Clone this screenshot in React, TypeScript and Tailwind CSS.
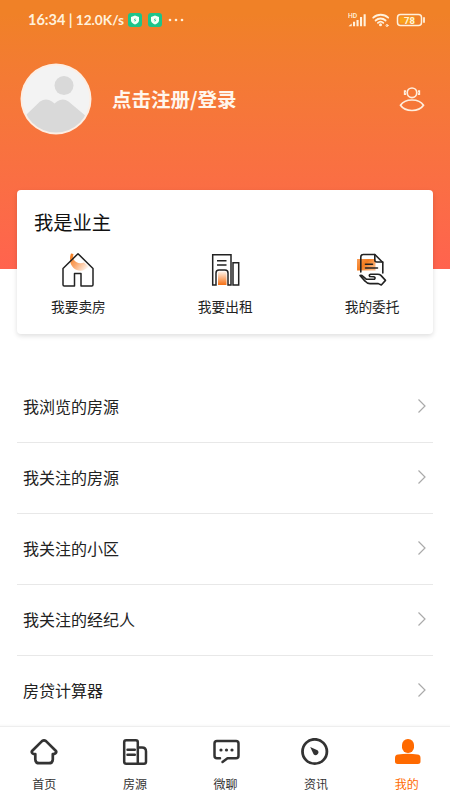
import type { ReactNode } from 'react';

const ownerActions = [
  { label: '我要卖房', icon: <SellIcon /> },
  { label: '我要出租', icon: <RentIcon /> },
  { label: '我的委托', icon: <EntrustIcon /> },
];

const menuItems = ['我浏览的房源', '我关注的房源', '我关注的小区', '我关注的经纪人', '房贷计算器'];

const tabs: { label: string; icon: ReactNode; active?: boolean }[] = [
  { label: '首页', icon: <HomeIcon /> },
  { label: '房源', icon: <BuildingIcon /> },
  { label: '微聊', icon: <ChatIcon /> },
  { label: '资讯', icon: <CompassIcon /> },
  { label: '我的', icon: <PersonIcon />, active: true },
];

function ShieldBadge() {
  return (
    <svg width="14" height="14" viewBox="0 0 14 14">
      <rect width="14" height="14" rx="3" fill="#1cc48a" />
      <path d="M7 2.500 11 3.900v3.400c0 2-1.600 3.500-4 4.300-2.400-.8-4-2.300-4-4.300V3.900z" fill="#f4fff6" />
      <path d="M7.500 4.800 5.700 7.200h1.300l-.5 2L8.400 6.700H7z" fill="#1cc48a" />
    </svg>
  );
}

function StatusBar() {
  return (
    <div className="flex h-10 items-center pl-7 pr-6 text-[#fff1dc]">
      <div className="flex w-[98px] items-center justify-between whitespace-nowrap pr-[2px] font-['Lato','Liberation_Sans',sans-serif] text-[14.500px] font-bold leading-none">
        <span>16:34</span>
        <span>|</span>
        <span className="text-[13.700px]">12.0K/s</span>
      </div>
      <div className="ml-[2px] flex items-center gap-[6px]">
        <ShieldBadge />
        <ShieldBadge />
      </div>
      <svg className="ml-[6px]" width="16" height="4" viewBox="0 0 16 4" fill="currentColor">
        <circle cx="2" cy="2" r="1.300" />
        <circle cx="8" cy="2" r="1.300" />
        <circle cx="14" cy="2" r="1.300" />
      </svg>
      <svg className="ml-auto" width="78" height="16" viewBox="0 0 78 16">
        <text x="0" y="5.500" fontSize="6.800" fontFamily="Roboto" fontWeight="500" fill="currentColor">HD</text>
        <g fill="currentColor">
          <path d="M.5 14.200h3.200v-2.600zM5 9.800h2.100v4.400H5zM8.500 8h2.100v6.200H8.500zM12 5h2.100v9.200H12zM15.600 2.200h2.100v12h-2.100z" />
          <circle cx="32.500" cy="12.800" r="1.500" />
        </g>
        <g fill="none" stroke="currentColor" strokeWidth="1.800" strokeLinecap="round">
          <path d="M25.200 5.700a11 11 0 0 1 15 0M27.600 8.500a7.200 7.200 0 0 1 10 0M29.900 10.900a4 4 0 0 1 5.400 0" />
          <circle cx="39" cy="13.500" r="1" strokeWidth="1" />
        </g>
        <rect x="49.500" y="2.500" width="24" height="11" rx="3" fill="none" stroke="currentColor" strokeWidth="1.500" />
        <rect x="51.500" y="4.500" width="15" height="7" fill="#f9a11b" />
        <path d="M76 6v4" stroke="currentColor" strokeWidth="1.800" strokeLinecap="round" />
        <text x="61.500" y="11.500" fontSize="9.500" fontFamily="Roboto" fontWeight="700" fill="currentColor" textAnchor="middle">78</text>
      </svg>
    </div>
  );
}

function Avatar() {
  return (
    <svg width="72" height="72" viewBox="0 0 72 72">
      <defs>
        <clipPath id="avatar">
          <circle cx="36" cy="36" r="33.500" />
        </clipPath>
      </defs>
      <circle cx="36" cy="36" r="35.500" fill="#fdeee3" />
      <circle cx="36" cy="36" r="33.500" fill="#f3f3f3" />
      <g clipPath="url(#avatar)" fill="#d9d9d9">
        <circle cx="44" cy="22.500" r="9.500" />
        <path d="M6 52 20 38.500q6-4 12 0l2.500 2 2.500-2q6-4 11.500 0L67 54v20H6z" />
      </g>
    </svg>
  );
}

function ServiceIcon() {
  return (
    <svg width="26" height="26" viewBox="0 0 26 26" fill="none" stroke="#ffeedd" strokeWidth="1.700">
      <circle cx="13" cy="6.800" r="4.800" />
      <path d="M7 5.200H5.700v3H7M19 5.200h1.300v3H19" />
      <path d="M1.500 19.300C4 15.300 7.500 14 13 14s9 1.300 11.500 5.300C22 23 18.500 24.500 13 24.500S4 23 1.500 19.300z" />
    </svg>
  );
}

function SellIcon() {
  return (
    <svg width="36" height="36" viewBox="0 0 36 36">
      <defs>
        <linearGradient id="sell" x1="0" y1="0" x2="1" y2=".7">
          <stop offset="0" stopColor="#f57a18" />
          <stop offset=".5" stopColor="#faa76c" />
          <stop offset="1" stopColor="#fff0e4" />
        </linearGradient>
      </defs>
      <path d="M11 1.500C9 7 10 12.500 13.500 16c4.500 4 11.500 3.500 15-1.500l-4.500-4c-4 1.500-8 .5-10-2.500-1-2-1-4.500-.5-6z" fill="url(#sell)" />
      <path
        d="M18 1.700 3 16.500v16.300q0 1.200 1.200 1.200H14.500V21.500h6.500V34h10.800q1.200 0 1.200-1.200V16.500z"
        fill="none"
        stroke="#222"
        strokeWidth="1.500"
        strokeLinejoin="round"
      />
    </svg>
  );
}

function RentIcon() {
  return (
    <svg width="36" height="36" viewBox="0 0 36 36">
      <defs>
        <linearGradient id="rent" x1="0" y1="0" x2="0" y2="1">
          <stop offset="0" stopColor="#fff3e9" />
          <stop offset="1" stopColor="#f56f12" />
        </linearGradient>
      </defs>
      <path d="M11 19.500h8.500V33H11z" fill="url(#rent)" />
      <g fill="none" stroke="#222" strokeWidth="1.500">
        <path d="M9 33H5.700V2.700h18.300V33h-3V21q0-3-3-3h-6q-3 0-3 3V33z" />
        <path d="M26 10.700h5.700V33H26z" />
        <path d="M10 8.700h9.500M10 13h9.500" />
      </g>
    </svg>
  );
}

function EntrustIcon() {
  return (
    <svg width="36" height="36" viewBox="0 0 36 36">
      <defs>
        <linearGradient id="entrust" x1="0" y1="0" x2="1" y2=".6">
          <stop offset="0" stopColor="#f9a05c" />
          <stop offset=".5" stopColor="#f47b1d" />
          <stop offset="1" stopColor="#fbb680" />
        </linearGradient>
      </defs>
      <path d="M3 7h18.500v11.500H3z" fill="url(#entrust)" />
      <g fill="none" stroke="#222" strokeWidth="1.600" strokeLinejoin="round" strokeLinecap="round">
        <path d="M6.800 20V5q0-2.500 2.500-2.500h11.500l8 8V21" />
        <path d="M20.800 2.500v5.500q0 2 2 2h6" />
        <path d="M11.500 12.200h7M11.500 16h12" />
        <path d="M6 23.500q1.500-.8 3 .8l3.500 3h8q1.500-1.800-.8-2.500l-4-.3q-1.200-1.500 1-2.300h7q2 0 3.200 1.200l4.600 5-4.200 4.600-3-1.400H16q-3 0-5-2.500z" />
      </g>
    </svg>
  );
}

function HomeIcon() {
  return (
    <svg width="30" height="28" viewBox="0 0 30 28" fill="none" stroke="#333" strokeWidth="2.700" strokeLinejoin="round">
      <path d="M13 3.100q2-1.500 4 0l9.700 9.600q1.300 1.300-.2 2.600-1.500.8-2.700.7V21.500q0 3.700-3.700 3.700H10q-3.700 0-3.700-3.700V16q-1.300.2-2.800-.7-1.500-1.300-.2-2.600z" />
    </svg>
  );
}

function BuildingIcon() {
  return (
    <svg width="30" height="28" viewBox="0 0 30 28" fill="none" stroke="#333" strokeWidth="2.500" strokeLinejoin="round">
      <path d="M4.200 4.200q0-2 2-2h9.600q2 0 2 2v21.500H6.200q-2 0-2-2z" />
      <path d="M17.800 9.500H22q4 0 4 4v10.200q0 2-2 2h-6.200" />
      <path d="M7.500 11.700h7.300M7.500 16.700h7.300" strokeLinecap="round" />
    </svg>
  );
}

function ChatIcon() {
  return (
    <svg width="30" height="28" viewBox="-1.500 0 30 28" fill="none" stroke="#333" strokeWidth="2.500" strokeLinejoin="round" strokeLinecap="round">
      <path d="M8.500 20.300h-3q-2.500 0-2.500-2.500V5.500Q3 3 5.500 3h19q2.500 0 2.500 2.500v12.300q0 2.500-2.500 2.500h-8.500l-5 3.700" />
      <g fill="#333" stroke="none">
        <circle cx="9.500" cy="12" r="1.600" />
        <circle cx="15" cy="12" r="1.600" />
        <circle cx="20.500" cy="12" r="1.600" />
      </g>
    </svg>
  );
}

function CompassIcon() {
  return (
    <svg width="30" height="28" viewBox="0 0 30 28">
      <circle cx="13.700" cy="13.500" r="12.200" fill="none" stroke="#333" strokeWidth="2.800" />
      <path d="M9.200 9l7.300 3.200a2.600 2.600 0 1 1-3.900 4z" fill="#333" />
    </svg>
  );
}

function PersonIcon() {
  return (
    <svg width="30" height="28" viewBox="0 0 30 28" fill="#ff6a00">
      <rect x="10" y="1" width="12" height="14" rx="5.800" />
      <path d="M3 20q0-3 3-3.400 10-1.600 19.500 0 3 .4 3 3.400v3.500q0 2.500-2.500 2.500H5.500Q3 26 3 23.500z" />
    </svg>
  );
}

export default function App() {
  return (
    <div className="flex h-[800px] w-[450px] flex-col overflow-hidden bg-white font-['Noto_Sans_CJK_SC',sans-serif] text-[#222]">
      {/* Header */}
      <header className="h-[269px] shrink-0 bg-linear-to-b from-[#f08127] from-5% to-[#ff634e]">
        <StatusBar />
        <div className="flex items-center pl-5 pr-[25px] pt-[23px]">
          <Avatar />
          <h1 className="ml-5 text-[19.500px] font-bold leading-7 text-[#fff6ec]">点击注册/登录</h1>
          <span className="ml-auto">
            <ServiceIcon />
          </span>
        </div>
      </header>

      {/* Owner card */}
      <section className="relative mx-[17px] -mt-[79px] h-[144px] shrink-0 rounded-[4px] bg-white pt-[18px] shadow-[0_2px_5px_rgba(0,0,0,0.13)]">
        <h2 className="pl-[17px] text-[19.300px] leading-7 text-[#111]">我是业主</h2>
        <div className="mr-[-12.500px] ml-[-12px] mt-[16px] grid grid-cols-3">
          {ownerActions.map((item) => (
            <div key={item.label} className="flex flex-col items-center">
              {item.icon}
              <span className="mt-2 text-[13.700px] leading-5">{item.label}</span>
            </div>
          ))}
        </div>
      </section>

      {/* Menu */}
      <ul className="mx-[17px] mt-[38px] min-h-0 flex-1 overflow-hidden">
        {menuItems.map((item) => (
          <li key={item} className="flex h-[71px] items-center justify-between border-b border-[#e8e8e8] pb-[2px] pl-[6px] pr-[5px] last:border-b-0">
            <span className="-mt-px text-[16px] leading-6">{item}</span>
            <svg className="-mt-px" width="12" height="16" viewBox="0 0 12 16" fill="none" stroke="#aaa" strokeWidth="1.200">
              <path d="M2.500 1.500 9 8l-6.500 6.500" />
            </svg>
          </li>
        ))}
      </ul>

      {/* Tab bar */}
      <nav className="-mr-[2px] -ml-[1px] flex h-[74px] shrink-0 border-t border-[#eee] bg-white pt-[11px] shadow-[0_-1px_2px_rgba(0,0,0,0.03)]">
        {tabs.map((tab) => (
          <div key={tab.label} className={`flex flex-1 flex-col items-center ${tab.active ? 'text-[#ff6a00]' : 'text-[#333]'}`}>
            {tab.icon}
            <span className="mt-[10px] text-[12px] leading-4">{tab.label}</span>
          </div>
        ))}
      </nav>
    </div>
  );
}
